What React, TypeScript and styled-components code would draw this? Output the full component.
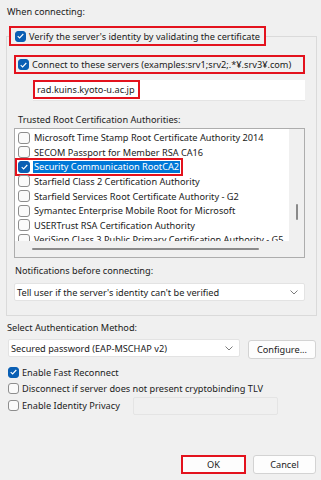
import styled, { createGlobalStyle, css } from "styled-components";

const RED = "#e3121d";

const GlobalStyle = createGlobalStyle`
  * { box-sizing: border-box; }
  html, body { margin: 0; padding: 0; background: #f0f0f0; }
  body {
    font-family: "Noto Sans", "Open Sans", sans-serif;
    font-size: 9.2px;
    color: #1b1b1b;
  }
`;

const Page = styled.div`
  width: 321px;
  height: 480px;
  display: flex;
  flex-direction: column;
  padding: 5px 4px 6px 6px;
`;

const Label = styled.div<{ $indent?: number; $top?: number }>`
  height: 14px;
  line-height: 14px;
  margin-top: ${(p) => p.$top ?? 0}px;
  padding-left: ${(p) => p.$indent ?? 0}px;
  white-space: nowrap;
`;

const Group = styled.fieldset`
  margin: 7px 0 0;
  padding: 0;
  border: 1px solid #dadada;
  min-width: 0;
`;

const Legend = styled.legend`
  margin-left: 2px;
  padding: 0;
`;

const GroupBody = styled.div`
  padding: 9px 11px 14px 7px;
`;

const CheckRow = styled.div<{ $marked?: boolean; $height: number; $pad?: number; $top?: number }>`
  display: flex;
  align-items: center;
  gap: 3px;
  height: ${(p) => p.$height}px;
  margin-top: ${(p) => p.$top ?? 0}px;
  white-space: nowrap;
  ${(p) =>
    p.$marked &&
    css`
      border: 2px solid ${RED};
      padding: 0 ${p.$pad ?? 2}px;
    `}
`;

const Box = styled.span<{ $checked?: boolean; $size?: number }>`
  flex: none;
  width: ${(p) => p.$size ?? 11}px;
  height: ${(p) => p.$size ?? 11}px;
  border-radius: 3px;
  display: inline-flex;
  align-items: center;
  justify-content: center;
  background: ${(p) => (p.$checked ? "#0a5fb4" : "#fafafa")};
  border: 1px solid ${(p) => (p.$checked ? "#0a5fb4" : "#8d8d8d")};
`;

const Check = ({ checked, size }: { checked?: boolean; size?: number }) => (
  <Box $checked={checked} $size={size}>
    {checked && (
      <svg width="7" height="6" viewBox="0 0 7 6">
        <path d="M0.7 3.1 L2.6 4.9 L6.3 1" stroke="#fff" strokeWidth="1.1" fill="none" />
      </svg>
    )}
  </Box>
);

const TextBox = styled.div`
  margin: 6px 0 0 19px;
  height: 21px;
  background: #fff;
  border-bottom: 1px solid #e4e4e4;
`;

const ServerName = styled.span`
  display: inline-flex;
  align-items: center;
  height: 19px;
  padding: 0 3px 0 2px;
  border: 2px solid ${RED};
`;

const ListBox = styled.div`
  margin-top: 1px;
  height: 130px;
  border: 1px solid #adadad;
  display: grid;
  grid-template-columns: 1fr 15px;
  grid-template-rows: 1fr 16px;
  background: #f0f0f0;
`;

const ListItems = styled.div`
  background: #fff;
  overflow: hidden;
  padding-top: 1.4px;
`;

const CertRow = styled.div`
  height: 14.6px;
  display: flex;
  align-items: center;
  gap: 4px;
  padding-left: 3px;
  white-space: nowrap;
`;

const Selected = styled.span`
  display: inline-flex;
  align-items: center;
  gap: 3px;
  outline: 2px solid ${RED};
  outline-offset: 1px;
`;

const Highlight = styled.span`
  background: #0078d7;
  color: #fff;
  line-height: 12px;
  padding: 0 1px;
`;

const VScroll = styled.div`
  display: flex;
  justify-content: center;
  padding-top: 75px;
`;

const HScroll = styled.div`
  display: flex;
  align-items: center;
  padding-left: 17px;
`;

const Thumb = styled.div<{ $w: number; $h: number }>`
  width: ${(p) => p.$w}px;
  height: ${(p) => p.$h}px;
  background: #8a8a8a;
  border-radius: 1px;
`;

const Select = styled.div<{ $top?: number }>`
  display: flex;
  align-items: center;
  justify-content: space-between;
  height: 18px;
  margin-top: ${(p) => p.$top ?? 0}px;
  padding: 0 6px 0 2px;
  background: #fff;
  border: 1px solid #e3e3e3;
  border-radius: 2px;
  white-space: nowrap;
  flex: 1;
`;

const Chevron = () => (
  <svg width="8" height="5" viewBox="0 0 8 5">
    <path d="M0.5 0.5 L4 4 L7.5 0.5" stroke="#7c7c7c" strokeWidth="1" fill="none" />
  </svg>
);

const MethodRow = styled.div`
  display: flex;
  align-items: flex-start;
  gap: 8px;
  margin: 4px 1px 0 2px;
`;

const Button = styled.button<{ $marked?: boolean; $width: number; $top?: number }>`
  width: ${(p) => p.$width}px;
  height: 19px;
  margin-top: ${(p) => p.$top ?? 0}px;
  padding: 0;
  font: inherit;
  color: #1b1b1b;
  background: #fdfdfd;
  border: 1px solid #d3d3d3;
  border-radius: 3px;
  ${(p) =>
    p.$marked &&
    css`
      border: 2px solid ${RED};
      border-radius: 0;
    `}
`;

const Options = styled.div`
  margin: 5px 0 0 2px;
  display: flex;
  flex-direction: column;
`;

const DisabledBox = styled.div`
  margin: 2px 39px 0 auto;
  width: 145px;
  height: 18px;
  border: 1px solid #e4e4e4;
  border-radius: 2px;
`;

const Actions = styled.div`
  margin-top: auto;
  display: flex;
  justify-content: flex-end;
  gap: 7px;
  padding-right: 1px;
`;

const certs = [
  "Microsoft Time Stamp Root Certificate Authority 2014",
  "SECOM Passport for Member RSA CA16",
  "Security Communication RootCA2",
  "Starfield Class 2 Certification Authority",
  "Starfield Services Root Certificate Authority - G2",
  "Symantec Enterprise Mobile Root for Microsoft",
  "USERTrust RSA Certification Authority",
  "VeriSign Class 3 Public Primary Certification Authority - G5",
];

export default function App() {
  return (
    <>
      <GlobalStyle />
      <Page>
        <Label $indent={1}>When connecting:</Label>
        <Group>
          <Legend>
            <CheckRow $marked $height={20} $pad={4}>
              <Check checked />
              Verify the server's identity by validating the certificate
            </CheckRow>
          </Legend>
          <GroupBody>
            <CheckRow $marked $height={19}>
              <Check checked />
              Connect to these servers (examples:srv1;srv2;.*¥.srv3¥.com)
            </CheckRow>
            <TextBox>
              <ServerName>rad.kuins.kyoto-u.ac.jp</ServerName>
            </TextBox>
            <Label $indent={4} $top={12}>
              Trusted Root Certification Authorities:
            </Label>
            <ListBox>
              <ListItems>
                {certs.map((name, i) =>
                  i === 2 ? (
                    <CertRow key={name}>
                      <Selected>
                        <Check checked size={12} />
                        <Highlight>{name}</Highlight>
                      </Selected>
                    </CertRow>
                  ) : (
                    <CertRow key={name}>
                      <Check size={12} />
                      {name}
                    </CertRow>
                  )
                )}
              </ListItems>
              <VScroll>
                <Thumb $w={2} $h={16} />
              </VScroll>
              <HScroll>
                <Thumb $w={227} $h={2} />
              </HScroll>
            </ListBox>
            <Label $indent={1} $top={6}>
              Notifications before connecting:
            </Label>
            <Select $top={5}>
              Tell user if the server's identity can't be verified
              <Chevron />
            </Select>
          </GroupBody>
        </Group>
        <Label $indent={1} $top={5}>
          Select Authentication Method:
        </Label>
        <MethodRow>
          <Select>
            Secured password (EAP-MSCHAP v2)
            <Chevron />
          </Select>
          <Button $width={68} $top={1}>
            Configure...
          </Button>
        </MethodRow>
        <Options>
          <CheckRow $height={16.5}>
            <Check checked />
            Enable Fast Reconnect
          </CheckRow>
          <CheckRow $height={16.5}>
            <Check />
            Disconnect if server does not present cryptobinding TLV
          </CheckRow>
          <CheckRow $height={16.5}>
            <Check />
            Enable Identity Privacy
            <DisabledBox />
          </CheckRow>
        </Options>
        <Actions>
          <Button $marked $width={65}>
            OK
          </Button>
          <Button $width={63}>Cancel</Button>
        </Actions>
      </Page>
    </>
  );
}
